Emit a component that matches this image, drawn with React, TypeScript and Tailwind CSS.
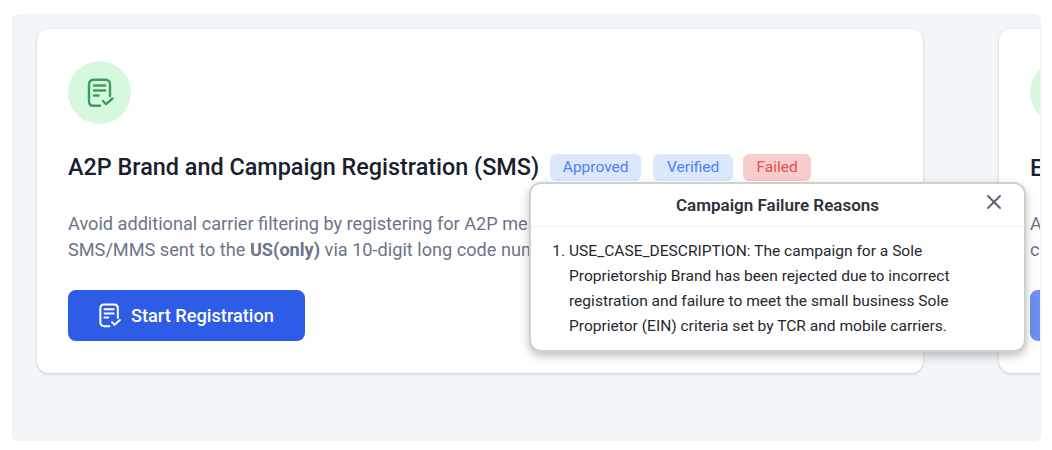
import { X } from 'lucide-react';

function DocCheckIcon({ className }: { className?: string }) {
  return (
    <svg viewBox="0 0 30 30" fill="none" stroke="currentColor" strokeWidth="2.4" strokeLinecap="round" strokeLinejoin="round" className={className}>
      <path d="M25 18V6.5C25 3.5 23.5 1.8 20.5 1.8H8.5C5.5 1.8 4 3.5 4 6.5V23.2C4 26.2 5.5 27.8 8.5 27.8H15" />
      <path d="M9 7.5H20" />
      <path d="M9 12.5H20" />
      <path d="M9 17.5H13.5" />
      <path d="M18 23L21 26.2L27.5 20.5" />
    </svg>
  );
}

function Badge({ label, className }: { label: string; className: string }) {
  return (
    <span className={`mb-[1px] flex h-[27px] items-center justify-center rounded-md text-[15.5px] ${className}`}>{label}</span>
  );
}

export default function App() {
  return (
    <div className="h-[450px] w-[1052px] bg-white pt-[14px] pl-3 font-['Roboto',sans-serif]">
      <div className="relative flex h-[427px] w-[1029px] gap-[76px] overflow-hidden rounded-md border border-[#eef1f5] bg-[#f3f6f9] pt-[14px] pl-6">
        <div className="h-[344px] w-[886px] shrink-0 rounded-xl bg-white pt-8 pl-[31px] shadow-[0_1px_3px_rgba(100,116,139,0.35)]">
          <div className="flex h-[63px] w-[63px] items-center justify-center rounded-full bg-[#d6f8de] text-[#3f9d5c]">
            <DocCheckIcon className="h-[30px] w-[30px]" />
          </div>
          <div className="mt-[27px] flex h-[34px] items-center">
            <h2 className="text-[23.4px] font-medium whitespace-nowrap text-[#18202f]">A2P Brand and Campaign Registration (SMS)</h2>
            <Badge label="Approved" className="ml-[11px] w-[91px] bg-[#dbe7fb] text-[#4f82f0]" />
            <Badge label="Verified" className="ml-[12px] w-[80px] bg-[#dbe7fb] text-[#4f82f0]" />
            <Badge label="Failed" className="ml-[10px] w-[68px] bg-[#f6cccc] text-[#e25252]" />
          </div>
          <p className="mt-[26px] w-[800px] text-[18.15px] leading-[26px] text-[#6b7488]">
            Avoid additional carrier filtering by registering for A2P messaging. Required for all
            <br />
            SMS/MMS sent to the <strong className="font-bold">US(only)</strong> via 10-digit long code numbers.
          </p>
          <button className="mt-[27px] flex h-[51px] w-[237px] items-center rounded-lg bg-[#2d5ce6] pl-[29px] text-[18.2px] font-medium text-white">
            <DocCheckIcon className="h-[25px] w-[25px]" />
            <span className="ml-[9px]">Start Registration</span>
          </button>
        </div>
        <div className="h-[344px] w-[887px] shrink-0 rounded-xl bg-white pt-8 pl-[31px] shadow-[0_1px_3px_rgba(100,116,139,0.35)]">
          <div className="h-[63px] w-[63px] rounded-full bg-[#d6f8de]" />
          <h2 className="mt-[27px] h-[34px] text-[23.4px] leading-[34px] font-medium whitespace-nowrap text-[#18202f]">Email</h2>
          <p className="mt-[26px] text-[18.15px] leading-[26px] whitespace-nowrap text-[#6b7488]">
            Avoid
            <br />
            carrier
          </p>
          <div className="mt-[27px] h-[51px] w-[237px] rounded-lg bg-[#6d8ff0]" />
        </div>
        <div className="absolute top-[167px] left-[516px] w-[497px] rounded-xl border-2 border-[#d0d0d0] bg-white shadow-[0_4px_10px_rgba(0,0,0,0.25)]">
          <div className="relative flex h-[43px] items-center justify-center border-b border-[#eceef1] pt-[2px]">
            <h3 className="text-[17px] font-semibold text-[#2e3138]">Campaign Failure Reasons</h3>
            <X className="absolute top-[6px] right-[18px] h-6 w-6 text-[#5c6672]" strokeWidth={1.9} />
          </div>
          <ol className="list-decimal pt-[12px] pr-[60px] pb-[11px] pl-[38px] text-[15.55px] leading-[25px] text-[#25282e]">
            <li>
              USE_CASE_DESCRIPTION: The campaign for a Sole Proprietorship Brand has been rejected due to incorrect registration and failure to meet the small business Sole Proprietor (EIN) criteria set by TCR and mobile carriers.
            </li>
          </ol>
        </div>
      </div>
    </div>
  );
}
